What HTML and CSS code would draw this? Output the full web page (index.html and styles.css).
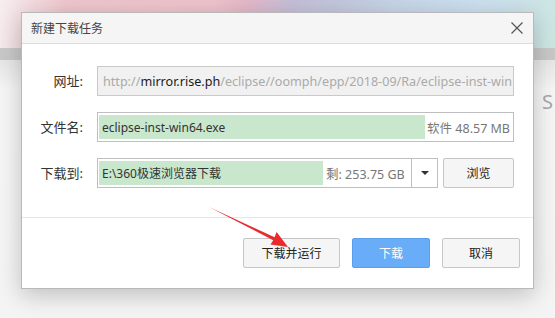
FILE: index.html
```html
<!DOCTYPE html>
<html lang="zh-CN">
<head>
<meta charset="UTF-8">
<title>新建下载任务</title>
<link rel="stylesheet" href="styles.css">
</head>
<body>

<div class="page">
  <div class="banner"></div>
  <div class="tabbar"></div>
  <div class="content"><span class="peek">S</span></div>
</div>

<div class="dialog">
  <div class="dialog-title">
    <span>新建下载任务</span>
    <button class="close" title="关闭">
      <svg width="12" height="12" viewBox="0 0 12 12"><path d="M0.5 0.5L11.5 11.5M11.5 0.5L0.5 11.5" stroke="#555" stroke-width="1.2" fill="none"/></svg>
    </button>
  </div>

  <div class="form">
    <label class="label">网址:</label>
    <div class="field disabled">
      <span class="url"><span class="dim">http://</span><b>mirror.rise.ph</b><span class="dim">/eclipse//oomph/epp/2018-09/Ra/eclipse-inst-win</span></span>
    </div>

    <label class="label">文件名:</label>
    <div class="field">
      <div class="fill">eclipse-inst-win64.exe</div>
      <span class="meta">软件 48.57 MB</span>
    </div>

    <label class="label">下载到:</label>
    <div class="path-row">
      <div class="field combo">
        <div class="fill fill-path">E:\360极速浏览器下载</div>
        <span class="meta free">剩: 253.75 GB</span>
        <span class="drop"><i class="caret"></i></span>
      </div>
      <button class="btn btn-browse">浏览</button>
    </div>
  </div>

  <div class="dialog-footer">
    <button class="btn btn-run">下载并运行</button>
    <button class="btn btn-primary">下载</button>
    <button class="btn">取消</button>
  </div>
</div>

<!-- 标注箭头 -->
<svg class="arrow" width="555" height="318" viewBox="0 0 555 318">
  <polygon points="209,207 274.6,237.2 276.6,232 288,247 270.5,244.6 273.2,240.2" fill="#ea2a2c"/>
</svg>

</body>
</html>
```

FILE: styles.css
```css
:root {
  --text: #333;
  --muted: #777;
  --border: #bfbfbf;
  --fill: #c9e7cc;
  --primary: #69acf7;
}
body {
  margin: 0;
  width: 555px;
  height: 318px;
  overflow: hidden;
  position: relative;
  font-family: 'Noto Sans', 'Noto Sans CJK SC', sans-serif;
  font-size: 12px;
  color: var(--text);
  background: #f4f4f4;
}
.page {
  height: 318px;
  display: flex;
  flex-direction: column;
}
.banner {
  height: 48px;
  background: linear-gradient(100deg, #f6eef0 0%, #efc6cd 12%, #eec3cc 38%, #e4b8c8 44%, #c4bfd8 52%, #c3c7dc 60%, #c6d5e6 70%, #cbe0f0 85%, #cde6e2 100%);
}
.tabbar {
  height: 12px;
  background: #c8c8c8;
}
.content {
  flex: 1;
  background: linear-gradient(to bottom, #e6e6e6, #f6f6f6 30px, #f4f4f4);
  padding: 28px 0 0 542px;
}
.peek {
  font-size: 20px;
  color: #a8a8a8;
}

.dialog {
  position: absolute;
  left: 21px;
  top: 12px;
  width: 513px;
  height: 277px;
  box-sizing: border-box;
  background: #fff;
  border: 1px solid #b9b9b9;
  box-shadow: 0 6px 22px rgba(0,0,0,0.22);
  display: flex;
  flex-direction: column;
}
.dialog-title {
  height: 30px;
  flex-shrink: 0;
  background: #f5f5f5;
  border-bottom: 1px solid #dcdcdc;
  display: flex;
  align-items: center;
  justify-content: space-between;
  padding: 0 10px 0 9px;
  font-size: 12px;
  color: #444;
}
.close {
  border: none;
  background: none;
  padding: 0;
  width: 12px;
  height: 12px;
  display: flex;
}

.form {
  display: grid;
  grid-template-columns: 61px 1fr;
  column-gap: 14px;
  row-gap: 16px;
  padding: 22px 19px 29px 0;
  border-bottom: 1px solid #e6e6e6;
}
.label {
  text-align: right;
  font-size: 13px;
  line-height: 30px;
  color: #333;
}
.field {
  height: 30px;
  box-sizing: border-box;
  border: 1px solid var(--border);
  padding: 1px;
  display: flex;
  align-items: stretch;
  min-width: 0;
  background: #fff;
}
.field.disabled {
  background: #f1f1f1;
  border-color: #c9c9c9;
  padding: 0 5px;
  align-items: center;
  overflow: hidden;
}
.url {
  white-space: nowrap;
  font-size: 12.6px;
  color: #333;
}
.url b {
  font-weight: normal;
  color: #1a1a1a;
}
.dim {
  color: #aaa;
}
.fill {
  flex: 1;
  background: var(--fill);
  display: flex;
  align-items: center;
  padding-left: 3px;
  white-space: nowrap;
  margin: 1px 0;
}
.meta {
  display: flex;
  align-items: center;
  color: var(--muted);
  padding: 0 2px;
  white-space: nowrap;
  font-size: 12.5px;
}
.path-row {
  display: flex;
  gap: 5px;
}
.combo {
  flex: 1;
}
.fill-path {
  flex: 0 0 221px;
}
.free {
  flex: 1;
  padding-left: 3px;
}
.drop {
  width: 25px;
  border-left: 1px solid var(--border);
  margin: -1px -1px -1px 0;
  display: flex;
  align-items: center;
  justify-content: center;
}
.caret {
  width: 0;
  height: 0;
  border-left: 4px solid transparent;
  border-right: 4px solid transparent;
  border-top: 4px solid #333;
}

.btn {
  height: 30px;
  width: 78px;
  box-sizing: border-box;
  border: 1px solid #c6c6c6;
  border-radius: 2px;
  background: #f5f5f5;
  color: #222;
  font-family: inherit;
  font-size: 12px;
  padding: 0;
}
.btn-browse {
  width: 71px;
}
.btn-run {
  width: 97px;
}
.btn-primary {
  background: var(--primary);
  border-color: #5b9fec;
  color: #fff;
}
.dialog-footer {
  display: flex;
  justify-content: flex-end;
  gap: 12px;
  padding: 20px 13px 20px 0;
}

.arrow {
  position: absolute;
  left: 0;
  top: 0;
  pointer-events: none;
}
```
